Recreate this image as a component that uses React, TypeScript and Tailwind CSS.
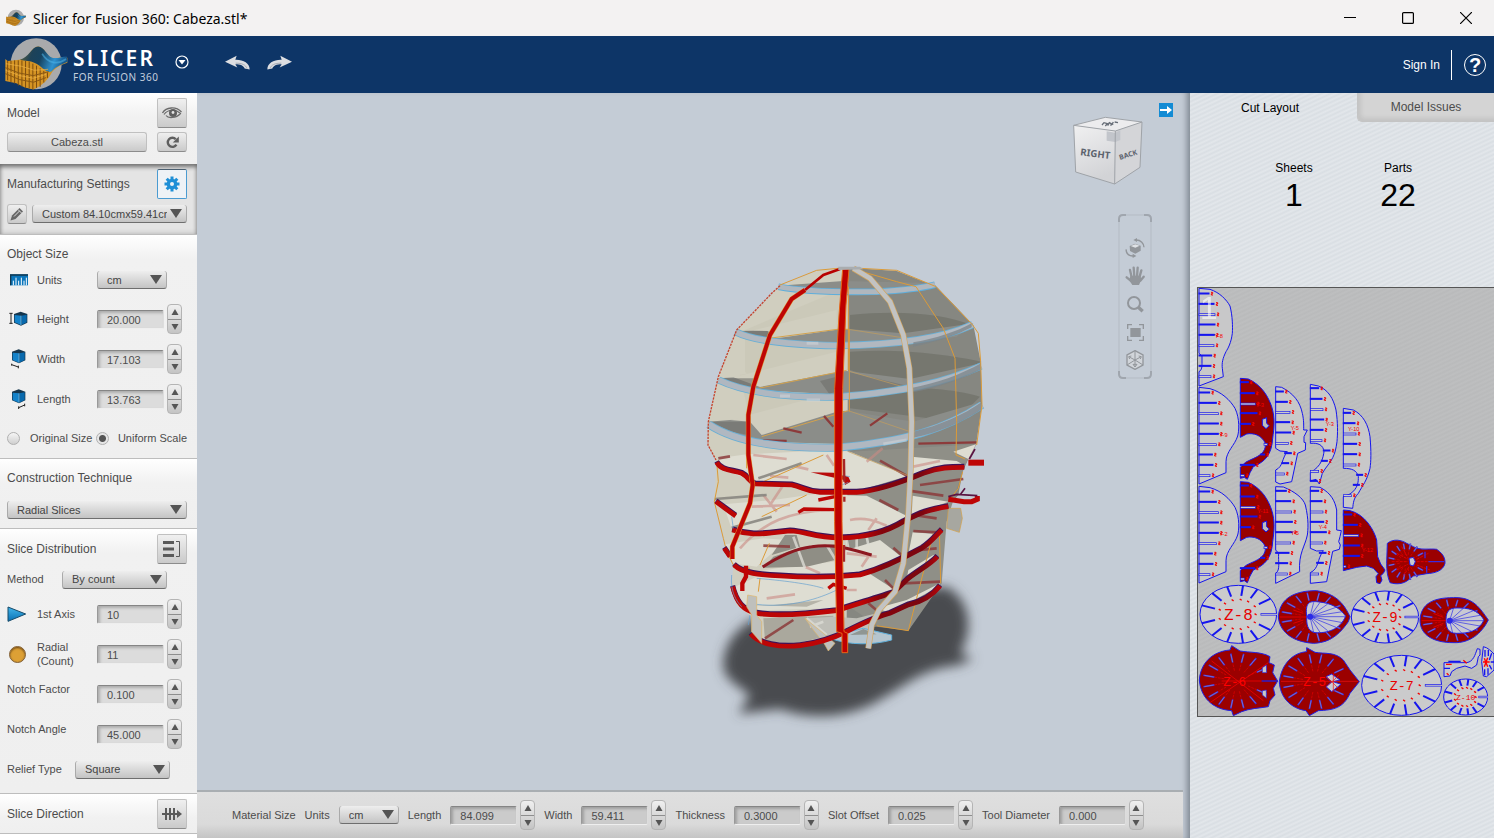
import { useId, type ReactNode } from "react";

/* ---------- small controls ---------- */

function Arrow({ up = false }: { up?: boolean }) {
  return (
    <svg width="8" height="6" viewBox="0 0 8 6" aria-hidden="true">
      <path d={up ? "M4 0 7.500 6H.5Z" : "M.5 0H7.500L4 6Z"} fill="#555" />
    </svg>
  );
}

function Stepper({ label }: { label: string }) {
  const half = "flex h-[14px] items-center justify-center";
  return (
    <span className="flex w-[15px] shrink-0 flex-col overflow-hidden rounded-[4px] border border-[#b4b4b4] bg-linear-to-b from-[#f0f0f0] to-[#c4c4c4]">
      <button type="button" aria-label={`Increase ${label}`} className={half}>
        <Arrow up />
      </button>
      <button type="button" aria-label={`Decrease ${label}`} className={`${half} border-t border-[#8e8e8e]`}>
        <Arrow />
      </button>
    </span>
  );
}

function NumberBox({ id, value, label, dark = false }: { id: string; value: string; label: string; dark?: boolean }) {
  return (
    <span className="flex items-center gap-[3px]">
      <input
        id={id}
        type="text"
        defaultValue={value}
        className={`h-[19px] w-[67px] rounded-[2px] border border-t-[#858585] border-l-[#999] border-r-[#ddd] border-b-[#eee] pt-[2px] pl-[9px] text-[11px] text-[#4c4c4c] shadow-[inset_2px_2px_3px_#00000038] ${dark ? "bg-[#cbcbcb]" : "bg-[#dcdcdc]"}`}
      />
      <Stepper label={label} />
    </span>
  );
}

function Dropdown({ id, value, label, width }: { id: string; value: string; label?: string; width: string }) {
  return (
    <span className={`relative flex ${width}`}>
      <select
        id={id}
        aria-label={label}
        defaultValue={value}
        className="h-[18px] w-full appearance-none rounded-[3px] border-x border-b border-x-[#aaa] border-b-[#6e6e6e] bg-linear-to-b from-[#eeeeee] to-[#c4c4c4] pr-[19px] pl-[9px] text-[11px] leading-[16px] text-[#444]"
      >
        <option>{value}</option>
      </select>
      <svg className="pointer-events-none absolute top-[4px] right-[5px]" width="12" height="9" viewBox="0 0 12 9" aria-hidden="true">
        <path d="M0 0H12L6 9Z" fill="#555" />
      </svg>
    </span>
  );
}

function IconButton({ label, active = false, children }: { label: string; active?: boolean; children: ReactNode }) {
  return (
    <button
      type="button"
      aria-label={label}
      className={`flex size-[30px] shrink-0 items-center justify-center rounded-[2px] border ${active ? "border-[#4a9bd1] border-t-[#4d6172] bg-[#eef2f6]" : "border-[#c0c0c0] border-b-[#8c8c8c] bg-linear-to-b from-[#f0f0f0] to-[#cacaca]"}`}
    >
      {children}
    </button>
  );
}

const section = "border-t border-[#bdbdbd] bg-linear-to-b from-white via-[#f1f1f1] via-[24px] to-[#efefef] pr-[10px] pl-[7px]";

function Title({ children }: { children: ReactNode }) {
  return <h2 className="text-[12px] leading-[14px]">{children}</h2>;
}

function Field({ icon, label, id, value, raised = false }: { icon?: ReactNode; label: ReactNode; id: string; value: string; raised?: boolean }) {
  return (
    <div className="flex h-[40px] items-center">
      {icon && <span className="flex w-[30px] shrink-0">{icon}</span>}
      <label htmlFor={id} className={`flex-1 leading-[14px] ${raised ? "pb-[10px]" : ""}`}>
        {label}
      </label>
      <span className="pr-[5px]">
        <NumberBox id={id} value={value} label={id} />
      </span>
    </div>
  );
}

/* ---------- icons ---------- */

function Logo({ className }: { className: string }) {
  const gradient = useId();
  return (
    <svg className={className} viewBox="0 0 190 165" aria-hidden="true">
      <defs>
        <linearGradient id={gradient} x1="0" y1="0" x2="1" y2="0.2">
          <stop offset="0" stopColor="#6f6a3c" />
          <stop offset="0.3" stopColor="#1d4258" />
          <stop offset="0.5" stopColor="#17435f" />
          <stop offset="0.8" stopColor="#2f92d0" />
          <stop offset="1" stopColor="#17598e" />
        </linearGradient>
      </defs>
      <circle cx="94" cy="80" r="77" fill="#a9aaac" />
      <path d="M1 66 8 72 30 70 60 66C75 50 85 28 100 28 120 30 125 56 140 62 155 66 170 58 188 62V77C165 84 150 95 142 105 132 125 115 145 86 158L60 152 34 139 1 132Z" fill="#d59424" />
      <path d="M45 68C72 62 80 28 100 28 120 30 126 56 142 62 158 66 172 58 186 58L189 74C165 84 150 92 141 103 125 112 110 86 90 78 75 70 60 72 45 68Z" fill={`url(#${gradient})`} />
      <path d="M112 50C130 80 160 84 184 66" fill="none" stroke="#4eb4e8" strokeWidth="5" opacity=".55" />
      <path d="M8 72V130M18 71V136M29 70V140M40 70V146M51 70V149M62 72V154M73 74V155M84 80V158M95 86V153M106 94V150M117 102V137M128 106V123" fill="none" stroke="#7d4d0e" strokeWidth="3" />
      <path d="M1 92 42 108 85 116 132 104M1 110 44 128 86 136 124 122" fill="none" stroke="#8a5812" strokeWidth="3" />
      <path d="M3 80 50 88 88 100 130 97M2 100 44 116 85 124 124 112" fill="none" stroke="#f0b549" strokeWidth="2" />
    </svg>
  );
}

function TurnArrow({ flip = false }: { flip?: boolean }) {
  return (
    <svg width="25" height="15" viewBox="0 0 75 44" aria-hidden="true" className={flip ? "-scale-x-100" : ""}>
      <path d="M0 20 35 2 31 14C54 13 74 24 74 43L59 40C56 31 47 27 31 27L37 37Z" fill="#dcdee2" />
      <path d="M32 24C52 24 62 29 66 40" fill="none" stroke="#a8adb5" strokeWidth="3" />
    </svg>
  );
}

function GearIcon() {
  return (
    <svg width="16" height="16" viewBox="0 0 16 16" aria-hidden="true">
      <g stroke="#1f8fd6" strokeWidth="3">
        <path d="M8 .5V15.500M.5 8H15.500M2.700 2.700 13.300 13.300M13.300 2.700 2.700 13.300" />
      </g>
      <circle cx="8" cy="8" r="5.300" fill="#1f8fd6" />
      <circle cx="8" cy="8" r="2" fill="#eef2f6" />
    </svg>
  );
}

function EyeIcon() {
  return (
    <svg width="20" height="13" viewBox="0 0 20 13" fill="none" stroke="#6a6a6a" aria-hidden="true">
      <path d="M.5 7C4 1 14 0 19.500 6" strokeWidth="1.300" />
      <path d="M2 8.500C6 3 14 3 18.500 7.500 14 12.500 6 12.500 4 9.500" strokeWidth="1.200" />
      <circle cx="11" cy="7" r="4" fill="#5f5f5f" stroke="none" />
      <circle cx="11" cy="6.500" r="1.400" fill="#e3e3e3" stroke="none" />
    </svg>
  );
}

function ReloadIcon() {
  return (
    <svg width="13" height="13" viewBox="0 0 13 13" aria-hidden="true">
      <path d="M10.400 8.600A4.600 4.600 0 1 1 9.800 3.200" fill="none" stroke="#5f5f5f" strokeWidth="2.400" />
      <path d="M12.800.5V6.500H6.800Z" fill="#5f5f5f" />
    </svg>
  );
}

function PencilIcon() {
  return (
    <svg width="14" height="14" viewBox="0 0 14 14" aria-hidden="true">
      <path d="M.5 13.500 2 8.500 9.500 1 13 4.500 5.500 12Z" fill="#666" />
      <path d="M8 2.500 11.500 6M4 9.500 9.500 4" stroke="#dedede" strokeWidth="1" />
    </svg>
  );
}

function RulerIcon() {
  return (
    <svg width="18" height="12" viewBox="0 0 54 36" className="ml-[3px]" aria-hidden="true">
      <path d="M0 1H54V34H0Z" fill="#0a75bb" />
      <path d="M0 1H54V5H0ZM0 1H4V34H0Z" fill="#123850" />
      <path d="M10 34V20M18 34V11M26 34V20M34 34V11M42 34V20M49 34V11" stroke="#fff" strokeWidth="3" />
    </svg>
  );
}

function CubeIcon({ mark }: { mark: "height" | "width" | "length" }) {
  const shift = mark === "height" ? "translate(14 7)" : "translate(8 0)";
  return (
    <svg width="19" height="20" viewBox="0 0 57 60" className="ml-[2px]" aria-hidden="true">
      <g transform={shift}>
        <path d="M1 8 21 1 41 8V34L22 43 1 34Z" fill="#15364e" />
        <path d="M3 11 22 13V41L3 33Z" fill="#1382ca" />
        <path d="M23 13 39 10V33L23 41Z" fill="#0869ad" />
        <path d="M22 13V41" stroke="#8cc4e4" strokeWidth="2" />
      </g>
      {mark === "height" && <path d="M1 13H11M1 43H11M6 13V43" stroke="#222" strokeWidth="3" />}
      {mark === "width" && <path d="M8 44V50M28 50V58M8 47 28 54" stroke="#222" strokeWidth="3" />}
      {mark === "length" && <path d="M29 52V60M47 44V52M29 56 47 48" stroke="#222" strokeWidth="3" />}
    </svg>
  );
}

function AxisIcon() {
  const gradient = useId();
  return (
    <svg width="20" height="17" viewBox="0 0 60 51" aria-hidden="true">
      <linearGradient id={gradient} x1="0" y1="0" x2="0" y2="1">
        <stop offset="0" stopColor="#43b5ea" />
        <stop offset="1" stopColor="#0870b4" />
      </linearGradient>
      <path d="M3 3 56 24 3 46Z" fill={`url(#${gradient})`} stroke="#164a69" strokeWidth="3" />
    </svg>
  );
}

/* ---------- 3D model ---------- */

const redPlates = [
  "M80 622C95 650 130 645 155 655 175 665 178 682 195 687L305 690C340 697 345 710 390 712H500C570 707 640 680 700 655 750 637 780 637 823 637",
  "M78 740 105 760 137 783M127 825C180 842 215 837 245 834L300 828C350 830 370 847 450 849 550 847 605 822 640 800 690 775 715 764 775 755",
  "M103 880 120 905M132 930C160 957 210 960 270 963 370 970 440 967 510 960 580 940 640 910 695 880 720 865 735 845 755 825",
  "M128 995C140 1045 160 1066 200 1075 250 1083 350 1078 440 1067 490 1050 570 1027 612 1012L650 975C680 950 720 930 742 905",
  "M182 1137C210 1170 270 1178 330 1172 390 1165 430 1150 470 1130 520 1105 570 1082 600 1075L655 1050C690 1042 725 1025 750 993",
];

const paleRib = "M490 40 540 70 600 140 640 240 658 340 665 500 662 640 655 775 640 925 615 1010 567 1065 545 1110 535 1180";
const redRib = "M345 105 305 132 240 240 190 395 175 480 175 600 188 690 180 745 127 875V912";

function HeadModel() {
  const blur = useId();
  const plate = useId();
  return (
    <svg role="img" aria-label="Sliced head model" className="absolute top-[162px] left-[493px] overflow-visible" width="310" height="475" viewBox="0 0 930 1425">
      <defs>
        <filter id={blur} x="-15%" y="-15%" width="130%" height="130%">
          <feGaussianBlur stdDeviation="17" />
        </filter>
        <linearGradient id={plate} gradientUnits="userSpaceOnUse" x1="80" y1="0" x2="830" y2="0">
          <stop offset="0" stopColor="#bb0606" />
          <stop offset="0.58" stopColor="#be0505" />
          <stop offset="0.66" stopColor="#85040c" />
          <stop offset="0.82" stopColor="#7c0610" />
          <stop offset="0.9" stopColor="#b8060a" />
        </linearGradient>
      </defs>
      <path d="M100 1230C100 1180 130 1120 200 1090L560 1010 770 995C845 1035 850 1130 810 1195L850 1211 800 1232C700 1238 650 1290 560 1340 470 1390 360 1395 270 1362L145 1376 180 1320C140 1290 100 1270 100 1230Z" fill="#484b4f" filter={`url(#${blur})`} />

      {/* shell: lit side and shaded side */}
      <path d="M465 38 380 48 268 95 140 225 85 365 54 500 54 570 80 620 73 730 100 850 130 930 125 1000 140 1050 185 1085 185 1140 220 1165 300 1175 420 1155 480 1130V38Z" fill="#d0cebf" />
      <path d="M475 38 620 48 740 95 850 210 872 320 876 450 858 570 836 610 818 650 805 720 780 750 750 820 755 985 720 1020 655 1127 560 1115 470 1120Z" fill="#868781" />
      <path d="M480 180C620 165 760 175 845 210L762 250 640 270 480 235ZM480 290C640 280 780 300 873 320L790 365 640 395 480 345ZM480 400C640 390 790 400 870 425L795 500 640 480 480 460Z" fill="#70716a" opacity=".75" />
      <path d="M165 225 450 105V340L210 395 165 350ZM150 360 440 300V450L185 520Z" fill="#c5c4b1" opacity=".45" />

      {/* tops of the lower plates */}
      <path d="M480 590 858 568 820 640 770 800 755 985 655 1127 560 1110 470 1050Z" fill="#8f8f87" />
      <g fill="#deddd2">
        <path d="M85 610 170 598 430 585 480 590 655 662 520 703 350 705 305 683 190 678 100 645Z" />
        <path d="M665 605 800 618 825 632 700 650 665 662ZM790 590 858 568 835 612Z" />
        <path d="M100 748 250 735 370 718 530 722 655 785 600 815 530 838 430 838 300 820 210 828 125 822Z" />
        <path d="M668 722 775 740 700 768 665 785Z" />
        <path d="M105 868 220 850 290 855 200 935 130 925ZM470 885 570 855 640 910 540 945 430 960 200 950 260 940 430 920Z" />
        <path d="M668 832 748 838 690 880 655 898Z" />
        <path d="M125 1000 200 965 400 968 530 950 615 1005 500 1040 430 1060 200 1066 145 1045Z" />
        <path d="M655 945 730 900 745 905 650 972ZM560 1060 650 1035 750 985 745 995 655 1045 590 1070Z" />
      </g>
      <path d="M220 938 250 905 330 878 435 868V915L350 935ZM285 840H320L330 875 245 900Z" fill="#8f8e85" />
      <path d="M220 1090 430 1082V1140L310 1166 225 1158Z" fill="#aaa89d" />
      <path d="M345 1090 430 1085 500 1090 560 1075 540 1150 430 1155Z" fill="#bfbfb8" />
      <path d="M160 1050H250L400 1035 350 1055Z" fill="#b5b3a8" />
      <path d="M775 760H812L817 790 808 832 770 820Z" fill="#a7a7a0" stroke="#d7a044" strokeWidth="2" />

      {/* joints seen through the plates */}
      <g fill="none" stroke="#8c3b3b" strokeWidth="8" opacity=".85">
        <path d="M570 617 655 665M85 610 120 604M690 690 820 672M655 707 760 722M568 735 625 765M670 780 740 790M220 872 300 875M610 878 640 905M670 828 745 832M690 885 740 880M585 975 610 1000M640 985 750 980M535 1045 565 1070M225 1150 310 1095" />
      </g>
      <g fill="none" stroke="#c98a83" strokeWidth="8" opacity=".6">
        <path d="M190 600 290 612M240 663 295 668M318 635 355 643M410 600 432 632M530 620 578 580M670 635 750 618M185 755 300 750M220 720 260 770M560 790 535 825M480 795C530 785 560 800 590 812M150 880C220 800 300 770 420 765M470 895 560 905M535 905 515 935M345 935 390 955M230 1030 315 1018M470 1005H500M280 690 240 750" />
      </g>
      <g fill="none" stroke="#85827c" strokeWidth="8" opacity=".85">
        <path d="M205 670 335 625M125 818 245 785M75 732 230 720" />
      </g>
      <path d="M310 845 345 940M410 870 440 920M470 855 475 880M500 850V880M530 845 535 870M350 1090 410 1140M360 1115 400 1100" fill="none" stroke="#dcdcd5" strokeWidth="8" opacity=".8" />

      {/* blue plates */}
      <g fill="#8b8d89">
        <path d="M265 92 460 78 730 84 740 95 580 115 350 112Z" />
        <path d="M135 228 470 222 640 235 850 205 800 245 560 272 240 260Z" />
        <path d="M85 370 470 348 660 372 872 325 800 375 560 425 200 405Z" />
        <path d="M55 500 470 467 670 500 875 440 800 500 560 570 200 560Z" />
      </g>
      <g fill="#d0cebf">
        <path d="M190 226 440 165V224L245 252 235 228ZM130 367 440 290V352L210 396ZM120 495 440 410V470L215 540 180 500Z" />
      </g>
      <g fill="#6f706b" opacity=".6">
        <path d="M135 228H232L245 258 180 250ZM85 370H195L190 400 130 392ZM390 378 440 365V425L420 420ZM480 352 650 392 540 410H480ZM55 500H175L178 540 90 525Z" />
      </g>
      <path d="M190 256 450 222 475 223M205 400 470 346M215 545 475 467" stroke="#d3a24d" strokeWidth="3" fill="none" />
      <path d="M475 223 650 250M475 348 655 400M475 467 660 530M475 590 655 662" stroke="#c69f5a" strokeWidth="2" fill="none" />
      <path d="M280 520 335 533M402 483 430 515M540 512 592 475M190 556 290 558M685 566 860 562" stroke="#8c3b3b" strokeWidth="7" />
      <g fill="none" strokeLinejoin="round">
        <path d="M265 95C330 108 430 112 560 110 640 106 700 98 735 89" stroke="#5faedb" strokeWidth="20" />
        <path d="M265 95C330 108 430 112 560 110 640 106 700 98 735 89" stroke="#b0b7be" strokeWidth="15" />
        <path d="M136 230C200 262 320 270 440 272 620 270 760 250 848 209" stroke="#68afd5" strokeWidth="22" />
        <path d="M136 230C200 262 320 270 440 272 620 270 760 250 848 209" stroke="#b1b8c0" strokeWidth="17" />
        <path d="M86 375C180 420 310 428 440 426 650 410 770 380 873 333" stroke="#68afd5" strokeWidth="22" />
        <path d="M86 375C180 420 310 428 440 426 650 410 770 380 873 333" stroke="#afb7c0" strokeWidth="17" />
        <path d="M56 508C150 570 300 580 440 578 650 560 770 520 876 450" stroke="#68afd5" strokeWidth="24" />
        <path d="M56 508C150 570 300 580 440 578 650 560 770 520 876 450" stroke="#b0b8c1" strokeWidth="19" />
      </g>
      <path d="M670 262C740 250 800 230 845 205V217C800 240 740 262 670 275ZM668 398C740 385 810 360 873 325V343C810 375 740 400 668 412ZM670 530C750 510 820 480 876 440V462C820 500 750 532 670 548Z" fill="#7b848a" opacity=".75" />
      <path d="M350 265H385M270 423H300M350 435H390M580 567 650 555" stroke="#d4d8dc" strokeWidth="9" opacity=".5" />

      {/* thin outlines */}
      <g fill="none" stroke="#dc9b38" strokeWidth="3">
        <path d="M465 38 380 46 270 90M475 38 620 46 738 95 848 210 865 235 872 320 876 450 860 570M500 45 620 80 678 95 760 220 795 310 800 500 798 600 825 612M475 95V345M478 223V470M80 620 85 680 73 740 100 850 110 890 130 930M655 1127 730 835M752 985 748 820M655 1127 560 1112M238 865 210 930M210 970 205 1010M130 935 180 940M818 650 805 700 778 735M170 590V640M400 600 220 680M350 720 215 785" />
      </g>
      <path d="M270 92 245 115 140 225 85 365 55 500 54 570 78 615" fill="none" stroke="#c5442d" strokeWidth="4" strokeDasharray="7 3" />

      {/* supports under the chin */}
      <path d="M345 1090 400 1135 435 1165 415 1188 402 1165 370 1125Z" fill="#bfc0bc" stroke="#dfb569" strokeWidth="2" />
      <path d="M430 1142 520 1120 605 1140V1155C550 1170 480 1172 420 1150Z" fill="#b6c5ce" stroke="#60b0db" strokeWidth="3" />
      <path d="M480 1140 520 1122 560 1138Z" fill="#8f9693" />

      {/* red plates */}
      <g fill="none">
        {redPlates.map((d) => (
          <g key={d}>
            <path d={d} transform="translate(0 -3)" stroke="#3d1259" strokeWidth="15" />
            <path d={d} stroke={`url(#${plate})`} strokeWidth="14" />
          </g>
        ))}
        <path d="M835 623H882" stroke="#be0505" strokeWidth="18" />
        <path d="M775 733 822 740H845L862 733V723" stroke="#be0505" strokeWidth="15" />
        <path d="M218 936C280 895 325 880 365 875 430 865 470 880 545 900" stroke="#8d1820" strokeWidth="9" />
        <path d="M325 772 342 762 435 764M385 735 435 725M415 1000 430 988 470 1000" stroke="#be0505" strokeWidth="10" />
      </g>
      <path d="M810 720 825 700M775 725 800 718 862 722M838 612 855 582" fill="none" stroke="#5b1442" strokeWidth="5" />
      <path d="M362 652 430 653 475 665 482 680 465 690 462 675Z" fill="#b90909" />
      <path d="M450 660 480 665M455 690 475 682M200 970C300 978 370 990 400 1000M200 1048C300 1060 390 1030 440 1005M130 820 125 785M125 960C120 1010 140 1040 155 1055M180 1080 175 1110" fill="none" stroke="#619ed0" strokeWidth="2" />
      <path d="M173 1020 200 1025V1080L215 1100V1165L185 1130V1080L170 1055Z" fill="#bfc0bc" stroke="#dfb569" strokeWidth="2" />

      {/* pale rib */}
      <path d={paleRib} fill="none" stroke="#d2a55e" strokeWidth="18" />
      <path d={paleRib} fill="none" stroke="#c2c3c3" strokeWidth="14" />

      {/* red vertical ribs */}
      <path d="M450 42 400 60 345 105" fill="none" stroke="#b80000" strokeWidth="8" />
      <path d={redRib} fill="none" stroke="#e09634" strokeWidth="15" />
      <path d={redRib} fill="none" stroke="#be0505" strokeWidth="12" />
      <path d="M168 932V965L157 985V1008" fill="none" stroke="#be0505" strokeWidth="13" />
      <path d="M458 42H477L468 150 458 400 456 600V800L462 1130 473 1135V1193H456V1135L440 1130 434 800V400L447 180Z" fill="#be0000" stroke="#e56718" strokeWidth="3" />
      <path d="M462 612 463 680M463 725V740M462 870V920" stroke="#a72525" strokeWidth="7" />
      <path d="M445 35H510L520 43 445 45Z" fill="#a9adb0" />
    </svg>
  );
}

/* ---------- view cube and tools ---------- */

function ViewCube() {
  const face = useId();
  return (
    <svg role="img" aria-label="View cube" className="absolute top-[23px] right-[46px]" width="72" height="70" viewBox="0 0 216 210">
      <linearGradient id={face} x1="0" y1="0" x2="0.300" y2="1">
        <stop offset="0" stopColor="#f0f0f1" />
        <stop offset="1" stopColor="#d2d3d6" />
      </linearGradient>
      <path d="M5 28 100 4 210 18 130 45Z" fill="#ececee" />
      <path d="M5 28 130 45 128 204 11 168Z" fill={`url(#${face})`} />
      <path d="M130 45 210 18 204 154 128 204Z" fill="#d4d5d8" />
      <path d="M104 46 130 50 145 43V72L130 78 104 74Z" fill="#c2c5cb" />
      <path d="M5 28 100 4 210 18 204 154 128 204 11 168ZM5 28 130 45 210 18M130 45 128 204" fill="none" stroke="#9fa3a8" strokeWidth="3" />
      <g fill="#5c636e" fontFamily="Noto Sans, sans-serif" fontWeight="700">
        <text x="24" y="118" fontSize="29" transform="rotate(7 24 118)">RIGHT</text>
        <text x="144" y="132" fontSize="21" transform="rotate(-18 144 132)">BACK</text>
      </g>
      <path d="M90 27 96 20 106 23 100 30M107 29 112 20 121 25 115 28M124 18 120 25M128 18 138 20" fill="none" stroke="#666d77" strokeWidth="4" />
    </svg>
  );
}

const tool = "flex size-[24px] items-center justify-center";

function ViewTools() {
  return (
    <div className="absolute top-[121px] right-[38px] w-[34px]">
      <svg className="absolute inset-0" width="34" height="165" viewBox="0 0 34 165" fill="none" aria-hidden="true">
        <rect x="1" y="1" width="32" height="163" rx="4" stroke="#b4bbc4" />
        <path d="M1 8V5Q1 1 5 1H8M26 1H29Q33 1 33 5V8M1 157V160Q1 164 5 164H8M26 164H29Q33 164 33 160V157" stroke="#a0a6ae" strokeWidth="2" />
      </svg>
      <div className="relative flex flex-col items-center gap-[4px] pt-[22px] pb-[8px] text-[#92969b]">
        <button type="button" aria-label="Orbit" className={tool}>
          <svg width="20" height="20" viewBox="0 0 60 60" fill="none" stroke="currentColor">
            <path d="M14 24 30 17 47 23V38L31 47 15 39Z" fill="currentColor" stroke="none" />
            <path d="M17 24 31 19 44 23 31 29Z" fill="#dfe2e6" stroke="none" />
            <path d="M3 34C4 46 12 54 24 54M57 28C57 16 47 6 34 6" strokeWidth="4" />
            <path d="M23 47 34 54 23 60ZM36 0 25 6 36 12Z" fill="currentColor" stroke="none" />
          </svg>
        </button>
        <button type="button" aria-label="Pan" className={tool}>
          <svg width="20" height="20" viewBox="0 0 60 60" aria-hidden="true">
            <path d="M20 34 15 12M28 32 26 5M36 32 38 5M43 35 49 13M46 44 56 32M17 44 5 34" stroke="currentColor" strokeWidth="7" strokeLinecap="round" />
            <path d="M17 29H46L49 41 42 57H22L12 42Z" fill="currentColor" />
          </svg>
        </button>
        <button type="button" aria-label="Zoom" className={tool}>
          <svg width="18" height="18" viewBox="0 0 54 54" fill="none" stroke="currentColor" aria-hidden="true">
            <circle cx="24" cy="24" r="18" strokeWidth="6" />
            <path d="M37 37 50 49" strokeWidth="10" />
          </svg>
        </button>
        <button type="button" aria-label="Fit" className={tool}>
          <svg width="17" height="17" viewBox="0 0 51 51" fill="none" stroke="currentColor" aria-hidden="true">
            <path d="M2 15V2H15M36 2H49V15M49 36V49H36M15 49H2V36" strokeWidth="4" />
            <path d="M10 12H41V39H10Z" fill="currentColor" stroke="none" />
          </svg>
        </button>
        <button type="button" aria-label="Home view" className={tool}>
          <svg width="18" height="20" viewBox="0 0 54 60" fill="none" stroke="currentColor" aria-hidden="true">
            <path d="M27 2 51 15V45L27 58 3 45V15Z" fill="#d1d5da" strokeWidth="4" />
            <path d="M27 30 44 21M27 30 10 21M27 30V50M3 45 27 30 51 45M27 2V30M21 43H33L27 51ZM38 18 46 20 43 27M16 18 8 20 11 27" strokeWidth="3" />
          </svg>
        </button>
      </div>
    </div>
  );
}

/* ---------- cut sheet ---------- */

type Slot = [x: number, y: number, length: number];

function Part({ d, slots, red = false, name, at, dy = 0 }: { d: string; slots: Slot[]; red?: boolean; name?: string; at?: [number, number]; dy?: number }) {
  return (
    <g transform={`translate(0 ${dy})`}>
      <path d={d} fill={red ? "#980000" : "#c8c8c9"} fillRule="evenodd" stroke="#1515ee" strokeWidth="3" />
      {slots.map(([x, y, w], i) => (
        <g key={i} fill="none">
          <rect x={x} y={y - 2} width={w} height={i % 3 === 2 ? 6 : 3} stroke="#1515ee" strokeWidth={i % 3 === 2 ? 2 : 3} fill={i % 3 === 2 ? "#ccc" : "#1515ee"} />
          <path d={`M${x + w + 6} ${y - 4}h5v4h-4v4h5`} stroke="#f20000" strokeWidth="3" />
        </g>
      ))}
      {name && at && (
        <text x={at[0]} y={at[1]} fontSize="17" fontFamily="Liberation Sans, sans-serif" fill="#f40000">
          {name}
        </text>
      )}
    </g>
  );
}

function Ring({ cx, cy, rx, ry, size, name, inner = 0.64 }: { cx: number; cy: number; rx: number; ry: number; size: number; name: string; inner?: number }) {
  const angles = [0, 33, 60, 83, 107, 133, 162, 198, 227, 253, 277, 300, 327];
  return (
    <g>
      <ellipse cx={cx} cy={cy} rx={rx} ry={ry} fill="#cbcbcc" stroke="#1515ee" strokeWidth="3" />
      {angles.map((a) => {
        const c = Math.cos((a * Math.PI) / 180);
        const s = Math.sin((a * Math.PI) / 180);
        const k = a === 0 ? inner - 0.06 : inner;
        return (
          <g key={a}>
            <path d={`M${cx + c * rx} ${cy + s * ry}L${cx + c * rx * k} ${cy + s * ry * k}`} stroke="#1515ee" strokeWidth={a === 0 ? 7 : 6} />
            {a === 0 && <path d={`M${cx + rx + 2} ${cy}H${cx + rx * k + 2}`} stroke="#cbcbcc" strokeWidth="3" />}
            <path d={`M${cx + c * rx * (k - 0.13) - 3} ${cy + s * ry * (k - 0.13) - 2}l6 4`} stroke="#f20000" strokeWidth="4" />
          </g>
        );
      })}
      <text x={cx} y={cy + size * 0.360} textAnchor="middle" fontSize={size} fontFamily="Liberation Mono, monospace" fill="#e80000">
        {name}
      </text>
    </g>
  );
}

function RedDisc({ d, cx, cy, rx, ry, hole }: { d: string; cx: number; cy: number; rx: number; ry: number; hole?: string }) {
  const angles = [28, 55, 78, 100, 122, 145, 168, 192, 215, 238, 260, 282, 305, 332];
  return (
    <g>
      <path d={d} fill="#9b0000" stroke="#2020e6" strokeWidth="3" />
      {angles.map((a) => {
        const c = Math.cos((a * Math.PI) / 180);
        const s = Math.sin((a * Math.PI) / 180);
        return (
          <g key={a}>
            <path d={`M${cx + c * rx * 0.350} ${cy + s * ry * 0.350}L${cx + c * rx * 0.640} ${cy + s * ry * 0.640}`} stroke="#e60000" strokeWidth="2" strokeDasharray="8 3" />
            <path d={`M${cx + c * rx * 0.620} ${cy + s * ry * 0.620}L${cx + c * rx * 0.930} ${cy + s * ry * 0.930}`} stroke="#3b2be0" strokeWidth="5" />
            <path d={`M${cx + c * rx * 0.640} ${cy + s * ry * 0.640}L${cx + c * rx * 0.900} ${cy + s * ry * 0.900}`} stroke="#8f8fc0" strokeWidth="2" />
          </g>
        );
      })}
      {hole && <path d={hole} fill="#c9c9d2" stroke="#2020e6" strokeWidth="3" />}
    </g>
  );
}

const rows = (x: number, y: number, lengths: number[]): Slot[] => lengths.map((w, i) => [x, y + i * 31, w]);

const wide = "M27 322 60 326C95 336 120 360 135 385 150 415 147 455 143 468 135 495 108 515 108 545V578L27 612Z";
const arch =
  "M151 295 175 297C215 315 235 350 245 380 256 415 252 445 248 475 245 525 225 545 190 560L180 578 172 598 163 592 151 595V562L163 550C180 535 230 530 226 490 215 465 190 458 170 462L151 472ZM217 418 230 413V430L238 437 228 446 217 436Z";

function CutSheet() {
  return (
    <svg role="img" aria-label="Sheet 1" className="block h-auto w-full" viewBox="24 24 888 1284">
      <Part
        d="M27 25 60 28C90 38 110 60 120 78 128 110 128 140 127 160 123 190 114 205 108 215 98 235 95 250 97 265L100 290 27 318V275C36 270 36 260 36 250V228L27 220Z"
        slots={rows(27, 41, [30, 45, 48, 48, 46, 45, 38, 36, 36])}
        name="Y-8"
        at={[74, 173]}
      />
      <text x="30" y="116" fontSize="95" fontFamily="Liberation Sans, sans-serif" fill="#fff" opacity=".6">
        1
      </text>
      <Part d={wide} slots={rows(27, 338, [32, 52, 58, 58, 58, 52, 40, 42, 33])} name="Y-9" at={[88, 470]} />
      <Part d={wide} dy={297} slots={rows(27, 338, [32, 52, 58, 58, 58, 52, 40, 42, 33])} name="Y-2" at={[88, 470]} />
      <Part d={arch} red slots={[[151, 307, 24], [151, 340, 42], [151, 371, 45], [151, 400, 50], [151, 432, 30], [222, 492, 10], [212, 524, 12], [151, 555, 42], [151, 586, 12]]} name="Y-3" at={[197, 380]} />
      <Part d={arch} dy={310} red slots={[[151, 307, 24], [151, 340, 42], [151, 371, 45], [151, 400, 50], [151, 432, 30], [222, 492, 10], [212, 524, 12], [151, 555, 42], [151, 586, 12]]} name="Y-11" at={[202, 390]} />
      <Part
        d="M257 320 275 322C310 340 330 365 337 400 342 420 341 440 341 450H352L342 470V487L347 488 346 510 323 520 305 605 270 612 257 606V570C280 560 275 535 292 515L270 513 257 505Z"
        slots={[[257, 335, 23], [257, 366, 35], [257, 396, 43], [257, 427, 42], [257, 458, 45], [257, 489, 38], [284, 520, 20], [276, 550, 20], [257, 581, 26]]}
        name="Y-5"
        at={[302, 449]}
      />
      <Part
        d="M257 620 280 621C315 635 340 655 346 675 357 720 354 750 352 765 345 800 325 820 329 875L257 910V880C272 870 264 845 266 820L257 810Z"
        slots={rows(257, 633, [32, 45, 48, 50, 50, 45, 40, 36, 35])}
        name="Y-5"
        at={[302, 765]}
      />
      <Part
        d="M361 313 385 318C415 330 430 355 438 390 444 430 443 460 441 485 435 530 425 540 405 567L397 580 388 612 378 598 361 603V577C395 560 400 530 402 515 400 495 385 488 361 490Z"
        slots={[[361, 325, 25], [361, 357, 35], [361, 388, 38], [361, 419, 40], [361, 450, 38], [361, 481, 35], [400, 512, 20], [394, 543, 18], [361, 573, 25], [361, 603, 20]]}
        name="Y-3"
        at={[407, 437]}
      />
      <Part
        d="M361 620 390 622C425 640 435 665 440 690V750L454 752 450 770 446 785 451 795 448 808 428 814 410 905 361 910V878C388 865 380 840 400 812L380 813 361 805Z"
        slots={[[361, 633, 25], [361, 664, 35], [361, 695, 38], [361, 726, 40], [361, 757, 48], [361, 788, 36], [388, 819, 20], [380, 849, 20], [361, 881, 25]]}
        name="Y-4"
        at={[386, 747]}
      />
      <Part
        d="M460 385 490 390C520 405 535 435 540 470 544 515 543 545 540 565 530 605 518 615 505 640 490 655 490 670 488 685L460 682V650L480 642C505 625 505 605 505 590 500 570 485 565 460 565Z"
        slots={[[460, 399, 22], [460, 430, 35], [460, 461, 38], [460, 492, 40], [460, 523, 40], [460, 554, 38], [500, 585, 18], [490, 615, 18], [460, 646, 24]]}
        name="Y-10"
        at={[474, 452]}
      />
      <Part
        red
        d="M460 690 480 692C525 703 552 750 560 780L563 830 572 852 585 870 580 880 572 887 576 900 570 911 560 908 558 890 565 881 550 865 530 858 500 862 460 872Z"
        slots={rows(460, 704, [25, 42, 46, 48, 48, 8])}
        name="Y-12"
        at={[515, 817]}
      />

      <RedDisc cx={650} cy={845} rx={60} ry={60} d="M592 790C610 775 635 780 650 790L670 800C690 812 720 805 740 808 765 825 765 840 765 850 760 872 735 880 710 881L670 888 655 900C640 912 620 914 600 908 592 890 590 870 590 850Z" hole="M657 835 670 832 676 845 670 858 660 855Z" />
      <path d="M605 845H655M680 845H740M620 820 655 838M620 870 655 852M635 800 655 835M640 890 658 858M680 838 715 820M680 855 720 870" stroke="#f00" strokeWidth="2" strokeDasharray="9 3" />
      <path d="M715 845H762M705 815V835M710 858V878" stroke="#3b2be0" strokeWidth="4" />
      <Ring cx={145} cy={1003} rx={115} ry={87} size={48} name="Z-8" />
      <RedDisc cx={368} cy={1011} rx={102} ry={80} d="M265 1010C270 950 320 932 380 932 435 940 460 970 475 1000L480 1010 475 1025C440 1075 410 1088 370 1090 300 1085 268 1050 265 1010Z" hole="M350 1010C345 965 360 964 380 965 440 970 455 995 467 1008 450 1050 410 1060 375 1058 350 1052 350 1030 350 1010Z" />
      <path d="M360 1010 371 967M360 1010 390 967M360 1010 413 972M360 1010 438 982M360 1010 458 995M360 1010H466M360 1010 458 1028M360 1010 438 1042M360 1010 413 1052M360 1010 390 1057M360 1010 371 1058M350 1010 376 1012" stroke="#2b2be8" strokeWidth="2" />
      <circle cx="360" cy="1010" r="9" fill="#2b2be8" />
      <path d="M270 1011H350M310 990 340 1000M310 1030 340 1020" stroke="#f00" strokeWidth="2" />
      <Ring cx={585} cy={1011} rx={101} ry={78} size={42} name="Z-9" />
      <RedDisc cx={785} cy={1021} rx={95} ry={68} d="M690 1020C693 970 730 953 790 953 850 950 870 985 895 1020 875 1060 840 1090 790 1088 730 1088 690 1065 690 1020Z" hole="M768 1020C768 985 785 983 810 984 850 984 870 1000 882 1020 865 1055 835 1060 800 1060 772 1060 768 1040 768 1020Z" />
      <path d="M779 1022 790 986M779 1022 820 985M779 1022 850 992M779 1022 870 1006M779 1022H880M779 1022 870 1038M779 1022 845 1054M779 1022 815 1059M779 1022 788 1059" stroke="#2b2be8" strokeWidth="2" />
      <circle cx="779" cy="1022" r="9" fill="#2b2be8" />
      <path d="M695 1022H768M730 1000 760 1012M730 1042 760 1030" stroke="#f00" strokeWidth="2" />

      <RedDisc cx={140} cy={1203} rx={110} ry={90} d="M28 1200C32 1150 65 1115 120 1110L125 1097 150 1113C180 1118 215 1115 240 1130L237 1148 253 1155 248 1178 263 1203 250 1225 255 1245 240 1262 235 1280C205 1285 180 1285 155 1295L130 1307 125 1292C65 1288 32 1250 28 1200Z" />
      <path d="M65 1143 220 1262M60 1268 235 1148M95 1203H215" stroke="#f00" strokeWidth="2" />
      <path d="M229 1155 217 1163V1178H230ZM217 1232 229 1230V1255L217 1245Z" fill="#c8c8c8" stroke="#2020e6" strokeWidth="2" />
      <path d="M215 1203H262" stroke="#2020e6" strokeWidth="4" />
      <text x="100" y="1217" fontSize="38" fontFamily="Liberation Mono, monospace" fill="#f00">Z-6</text>
      <RedDisc cx={375} cy={1205} rx={105} ry={90} d="M268 1205C275 1150 310 1118 350 1115V1103L375 1117C405 1122 435 1115 460 1140L480 1170 508 1205 480 1240C460 1285 430 1290 385 1292L358 1307 348 1292C300 1285 270 1250 268 1205Z" hole="M408 1190 425 1182 450 1200 430 1205 453 1213 425 1235 408 1220 425 1206Z" />
      <path d="M273 1204H505M430 1182V1235M410 1190 445 1225M410 1220 448 1185" stroke="#e11" strokeWidth="2" />
      <text x="340" y="1217" fontSize="38" fontFamily="Liberation Mono, monospace" fill="#f00">Z-5</text>
      <Ring cx={635} cy={1216} rx={120} ry={90} size={40} name="Z-7" />
      <Ring cx={827} cy={1251} rx={66} ry={54} size={24} name="Z-10" />
      <path d="M762 1148H830C850 1145 855 1125 862 1106L870 1108V1125L865 1130 860 1155 845 1165 825 1158 800 1165 785 1175 780 1188 762 1190Z" fill="#c8c8c9" stroke="#1515ee" strokeWidth="3" />
      <path d="M775 1144H812M762 1165H780" stroke="#1515ee" strokeWidth="4" />
      <path d="M820 1141 830 1150M768 1153H785M770 1180 776 1185" stroke="#f00" strokeWidth="4" />
      <path d="M880 1100C893 1102 905 1115 912 1122V1170L890 1190 880 1188 875 1145Z" fill="#c8c8c9" stroke="#1515ee" strokeWidth="3" />
      <path d="M885 1110V1130M895 1110V1128M905 1120 898 1140M912 1146H902M905 1168 898 1155M894 1184V1165M884 1186V1168" stroke="#1515ee" strokeWidth="4" />
      <path d="M883 1135 893 1160M893 1133 883 1160M879 1146H899" stroke="#f00" strokeWidth="4" />
    </svg>
  );
}

/* ---------- panels ---------- */

function TitleBar() {
  return (
    <div className="flex h-[36px] shrink-0 items-center bg-[#f3f2f2] text-black">
      <Logo className="ml-[6px] h-[18px] w-[20px]" />
      <h1 className="ml-[7px] flex-1 font-['Noto_Sans',sans-serif] text-[14px]">Slicer for Fusion 360: Cabeza.stl*</h1>
      <button type="button" aria-label="Minimize" className="flex h-full w-[58px] items-center justify-center">
        <svg width="12" height="12" viewBox="0 0 12 12"><path d="M0 5.500H12" stroke="#000" /></svg>
      </button>
      <button type="button" aria-label="Maximize" className="flex h-full w-[58px] items-center justify-center">
        <svg width="12" height="12" viewBox="0 0 12 12"><rect x=".6" y=".6" width="10.800" height="10.800" rx="1" fill="none" stroke="#000" strokeWidth="1.200" /></svg>
      </button>
      <button type="button" aria-label="Close" className="mr-[-1px] flex h-full w-[58px] items-center justify-center">
        <svg width="12" height="12" viewBox="0 0 12 12"><path d="M0 0 12 12M12 0 0 12" stroke="#000" strokeWidth="1.200" /></svg>
      </button>
    </div>
  );
}

function Header() {
  return (
    <header className="flex h-[57px] shrink-0 items-center bg-[#0d3567] text-white">
      <Logo className="ml-[5px] h-[55px] w-[63px]" />
      <div className="ml-[5px] w-[93px] font-['Noto_Sans',sans-serif] whitespace-nowrap">
        <div className="text-[21px] leading-[26px] font-semibold tracking-widest">SLICER</div>
        <div className="text-[10px] leading-[13px] tracking-wider text-[#c3cedd]">FOR FUSION 360</div>
      </div>
      <div className="mb-[5px] ml-[9px] flex items-center">
        <button type="button" aria-label="Application menu">
          <svg width="14" height="14" viewBox="0 0 14 14"><circle cx="7" cy="7" r="6" fill="none" stroke="#fff" strokeWidth="1.200" /><path d="M3.500 5H10.500L7 9.500Z" fill="#fff" /></svg>
        </button>
        <button type="button" aria-label="Undo" className="ml-[36px]"><TurnArrow /></button>
        <button type="button" aria-label="Redo" className="ml-[17px]"><TurnArrow flip /></button>
      </div>
      <div className="flex-1" />
      <a href="#sign-in" className="text-[12px]">Sign In</a>
      <span className="ml-[11px] h-[30px] border-l border-white" />
      <button type="button" aria-label="Help" className="mr-[8px] ml-[12px] flex size-[22px] items-center justify-center rounded-full border border-white text-[20px] leading-[20px] font-bold">?</button>
    </header>
  );
}

const radio =
  "size-[13px] appearance-none rounded-full border border-[#b0b0b0] bg-linear-to-b from-[#f6f6f6] to-[#cfcfcf] checked:bg-[radial-gradient(circle,#555_3px,#e6e6e6_4px)]";

const smallButton = "flex h-[20px] items-center justify-center rounded-[3px] border border-[#c0c0c0] border-b-[#8c8c8c] bg-linear-to-b from-[#efefef] to-[#cacaca]";

function Sidebar() {
  return (
    <aside className="flex w-[197px] shrink-0 flex-col overflow-hidden bg-[#f0f0f0] text-[11px] text-[#4c4c4c]">
      <section className="h-[71px] bg-linear-to-b from-white via-[#f1f1f1] via-[24px] to-[#efefef] pr-[10px] pl-[7px]">
        <div className="flex h-[39px] items-center justify-between">
          <Title>Model</Title>
          <IconButton label="Show model"><EyeIcon /></IconButton>
        </div>
        <div className="flex gap-[10px]">
          <button type="button" className={`flex-1 ${smallButton}`}>Cabeza.stl</button>
          <button type="button" aria-label="Reload model" className={`w-[30px] ${smallButton}`}><ReloadIcon /></button>
        </div>
      </section>

      <section className="h-[70px] bg-[#e4e4e4] pr-[10px] pl-[7px] shadow-[inset_0_3px_4px_#00000080,inset_0_-2px_4px_#0000001a]">
        <div className="flex h-[40px] items-center justify-between">
          <Title>Manufacturing Settings</Title>
          <IconButton label="Manufacturing settings" active><GearIcon /></IconButton>
        </div>
        <div className="flex items-center justify-between">
          <button type="button" aria-label="Edit settings" className={`w-[20px] ${smallButton}`}><PencilIcon /></button>
          <Dropdown id="preset" label="Preset" value="Custom 84.10cmx59.41cm" width="w-[155px]" />
        </div>
      </section>

      <section className={`h-[224px] ${section}`}>
        <div className="pt-[12px]"><Title>Object Size</Title></div>
        <div className="flex h-[38px] items-center">
          <span className="flex w-[30px] shrink-0"><RulerIcon /></span>
          <label htmlFor="units" className="flex-1">Units</label>
          <span className="pr-[20px]"><Dropdown id="units" value="cm" width="w-[70px]" /></span>
        </div>
        <Field icon={<CubeIcon mark="height" />} label="Height" id="height" value="20.000" />
        <Field icon={<CubeIcon mark="width" />} label="Width" id="width" value="17.103" />
        <Field icon={<CubeIcon mark="length" />} label="Length" id="length" value="13.763" />
        <div className="flex h-[39px] items-center justify-between whitespace-nowrap">
          <label className="flex items-center gap-[10px]">
            <input type="radio" name="scale" className={radio} />
            Original Size
          </label>
          <label className="flex items-center gap-[9px]">
            <input type="radio" name="scale" defaultChecked className={radio} />
            Uniform Scale
          </label>
        </div>
      </section>

      <section className={`h-[70px] ${section}`}>
        <div className="pt-[12px]"><Title>Construction Technique</Title></div>
        <div className="pt-[16px]"><Dropdown id="technique" label="Construction Technique" value="Radial Slices" width="w-full" /></div>
      </section>

      <section className={`h-[265px] ${section}`}>
        <div className="flex h-[40px] items-center justify-between">
          <Title>Slice Distribution</Title>
          <IconButton label="Slice distribution">
            <svg width="20" height="18" viewBox="0 0 20 18" aria-hidden="true"><path d="M1 2.500H12M1 9H12M1 15.500H12" stroke="#5a5a5a" strokeWidth="3" /><path d="M14 1.500H17.500V16.500H14" fill="none" stroke="#5a5a5a" /></svg>
          </IconButton>
        </div>
        <div className="flex h-[25px] items-center justify-between pr-[20px] pb-[4px]">
          <label htmlFor="method">Method</label>
          <Dropdown id="method" value="By count" width="w-[105px]" />
        </div>
        <Field icon={<AxisIcon />} label="1st Axis" id="first-axis" value="10" />
        <Field
          icon={<span className="ml-[2px] size-[17px] rounded-full border border-[#806039] bg-[#dda035] shadow-[inset_0_1px_2px_#6b4510]" />}
          label={<>Radial<br />(Count)</>}
          id="radial"
          value="11"
        />
        <Field label="Notch Factor" id="notch-factor" value="0.100" raised />
        <Field label="Notch Angle" id="notch-angle" value="45.000" raised />
        <div className="flex h-[31px] items-center justify-between pr-[17px]">
          <label htmlFor="relief">Relief Type</label>
          <Dropdown id="relief" value="Square" width="w-[95px]" />
        </div>
      </section>

      <section className={`h-[40px] ${section}`}>
        <div className="flex h-[40px] items-center justify-between">
          <Title>Slice Direction</Title>
          <IconButton label="Slice direction">
            <svg width="20" height="14" viewBox="0 0 20 14" aria-hidden="true"><path d="M0 7H16M4 1V13M8 1V13M12 1V13" stroke="#5a5a5a" strokeWidth="2" /><path d="M15 3 20 7 15 11Z" fill="#5a5a5a" /></svg>
          </IconButton>
        </div>
      </section>
      <div className="flex-1 border-t border-[#bdbdbd] bg-white" />
    </aside>
  );
}

function MaterialBar() {
  const fields: [string, string, string][] = [
    ["Length", "m-length", "84.099"],
    ["Width", "m-width", "59.411"],
    ["Thickness", "m-thickness", "0.3000"],
    ["Slot Offset", "m-slot", "0.025"],
    ["Tool Diameter", "m-tool", "0.000"],
  ];
  return (
    <footer className="mr-[7px] flex h-[48px] shrink-0 items-center gap-[9px] border-t-2 border-[#a9aeb2] bg-linear-to-b from-[#dfdfdf] via-[#dadada] via-70% to-[#c4c4c4] pl-[35px] text-[11px] whitespace-nowrap text-[#4c4c4c]">
      <span>Material Size</span>
      <label htmlFor="m-units">Units</label>
      <Dropdown id="m-units" value="cm" width="w-[60px]" />
      {fields.map(([label, id, value]) => (
        <span key={id} className="flex items-center gap-[9px]">
          <label htmlFor={id}>{label}</label>
          <NumberBox id={id} value={value} label={label} dark />
        </span>
      ))}
    </footer>
  );
}

function LayoutPanel() {
  return (
    <aside className="flex w-[304px] shrink-0 flex-col bg-[#dde2e7] bg-[repeating-linear-gradient(155deg,#d9dee3_0px,#e3e7eb_2px,#d9dee3_4px)] text-[12px] text-black">
      <div className="flex h-[29px]" role="tablist">
        <button type="button" role="tab" aria-selected="true" className="w-[160px]">Cut Layout</button>
        <button type="button" role="tab" aria-selected="false" className="ml-[7px] flex-1 rounded-bl-[5px] border-b border-l border-[#c4c4c4] bg-[#d4d4d4] text-[#4c4c4c] shadow-[inset_3px_-3px_4px_#00000014]">Model Issues</button>
      </div>
      <dl className="flex gap-[24px] pt-[38px] pl-[64px] text-center">
        <div className="w-[80px]">
          <dt className="leading-[17px]">Sheets</dt>
          <dd className="text-[32px] leading-[36px]">1</dd>
        </div>
        <div className="w-[80px]">
          <dt className="leading-[17px]">Parts</dt>
          <dd className="text-[32px] leading-[36px]">22</dd>
        </div>
      </dl>
      <div className="mt-[74px] ml-[7px] border-y border-l border-[#555] bg-[#bcbcbd] bg-[repeating-linear-gradient(155deg,#b9babb_0px,#bebfc0_2px,#b9babb_4px)]">
        <CutSheet />
      </div>
    </aside>
  );
}

export default function App() {
  return (
    <div className="flex min-h-screen flex-col overflow-x-hidden font-['Liberation_Sans',Arial,sans-serif]">
      <TitleBar />
      <Header />
      <div className="flex flex-1">
        <Sidebar />
        <main className="flex min-w-0 flex-1 flex-col bg-[#c4ccd6] shadow-[inset_-7px_0_6px_-4px_#7d8690]">
          <div className="relative flex-1">
            <button type="button" aria-label="Collapse panel" className="absolute top-[10px] right-[17px] flex size-[14px] items-center justify-center bg-[#138bd4]">
              <svg width="12" height="8" viewBox="0 0 12 8"><path d="M0 4H8" stroke="#fff" strokeWidth="2" /><path d="M7 0 12 4 7 8Z" fill="#fff" /></svg>
            </button>
            <ViewCube />
            <ViewTools />
            <HeadModel />
          </div>
          <MaterialBar />
        </main>
        <LayoutPanel />
      </div>
    </div>
  );
}
